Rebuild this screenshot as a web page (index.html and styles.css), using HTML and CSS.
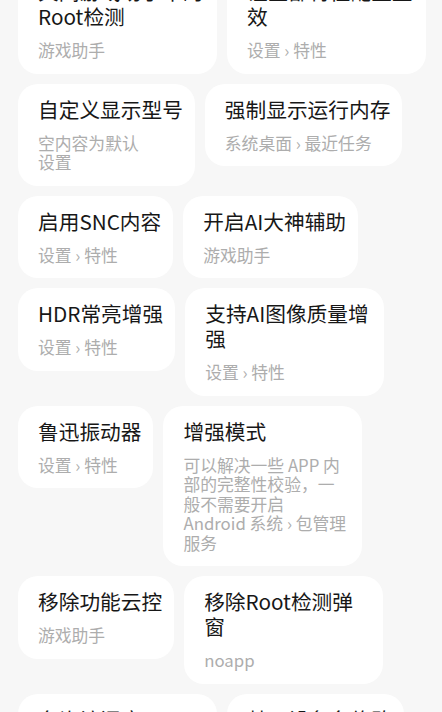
FILE: index.html
```html
<!DOCTYPE html>
<html lang="zh-CN">

<head>
    <meta charset="UTF-8">
    <meta name="viewport" content="width=device-width, initial-scale=1.0">
    <title>功能列表</title>
    <link rel="stylesheet" href="styles.css">
</head>

<body>
    <div class="list">
        <div class="card">
            <div class="title">关闭游戏助手中的Root检测</div>
            <div class="path">游戏助手</div>
        </div>
        <div class="card">
            <div class="title">让全部特性配置生效</div>
            <div class="path">设置 › 特性</div>
        </div>

        <div class="card">
            <div class="title">自定义显示型号</div>
            <div class="desc">空内容为默认</div>
            <div class="path">设置</div>
        </div>
        <div class="card">
            <div class="title">强制显示运行内存</div>
            <div class="path">系统桌面 › 最近任务</div>
        </div>

        <div class="card">
            <div class="title">启用SNC内容</div>
            <div class="path">设置 › 特性</div>
        </div>
        <div class="card">
            <div class="title">开启AI大神辅助</div>
            <div class="path">游戏助手</div>
        </div>

        <div class="card">
            <div class="title">HDR常亮增强</div>
            <div class="path">设置 › 特性</div>
        </div>
        <div class="card">
            <div class="title">支持AI图像质量增强</div>
            <div class="path">设置 › 特性</div>
        </div>

        <div class="card">
            <div class="title">鲁迅振动器</div>
            <div class="path">设置 › 特性</div>
        </div>
        <div class="card">
            <div class="title">增强模式</div>
            <div class="desc">可以解决一些 APP 内部的完整性校验，一般不需要开启</div>
            <div class="path">Android 系统 › 包管理服务</div>
        </div>

        <div class="card">
            <div class="title">移除功能云控</div>
            <div class="path">游戏助手</div>
        </div>
        <div class="card">
            <div class="title">移除Root检测弹窗</div>
            <div class="path">noapp</div>
        </div>

        <div class="card">
            <div class="title">允许访问应用 Android/data 目录</div>
            <div class="path">文件管理</div>
        </div>
        <div class="card">
            <div class="title">禁用设备名修改</div>
            <div class="path">设置 › 关于本机</div>
        </div>
    </div>
</body>

</html>
```

FILE: styles.css
```css
* {
    margin: 0;
    padding: 0;
    box-sizing: border-box;
}

body {
    background-color: #f7f7f7;
    font-family: "Noto Sans CJK SC", "Noto Sans", sans-serif;
    overflow: hidden;
}

/* 列表：卡片自动换行，页面已向下滚动了一点 */
.list {
    display: flex;
    flex-wrap: wrap;
    align-items: flex-start;
    gap: 10px 10px;
    margin-top: -34px;
    padding: 0 16px 0 18px;
}

/* 卡片宽度由内容决定，最多 199px */
.card {
    max-width: 199px;
    padding: 13px 12px 13px 20px;
    background-color: #fff;
    border-radius: 20px;
}

.card .title {
    font-size: 20.7px;
    line-height: 25px;
    color: #171717;
}

.card .desc,
.card .path {
    font-size: 16.8px;
    line-height: 19.5px;
    color: #adadad;
}

.card .desc {
    margin-top: 12px;
}

.card .title + .path {
    margin-top: 12px;
}
```
